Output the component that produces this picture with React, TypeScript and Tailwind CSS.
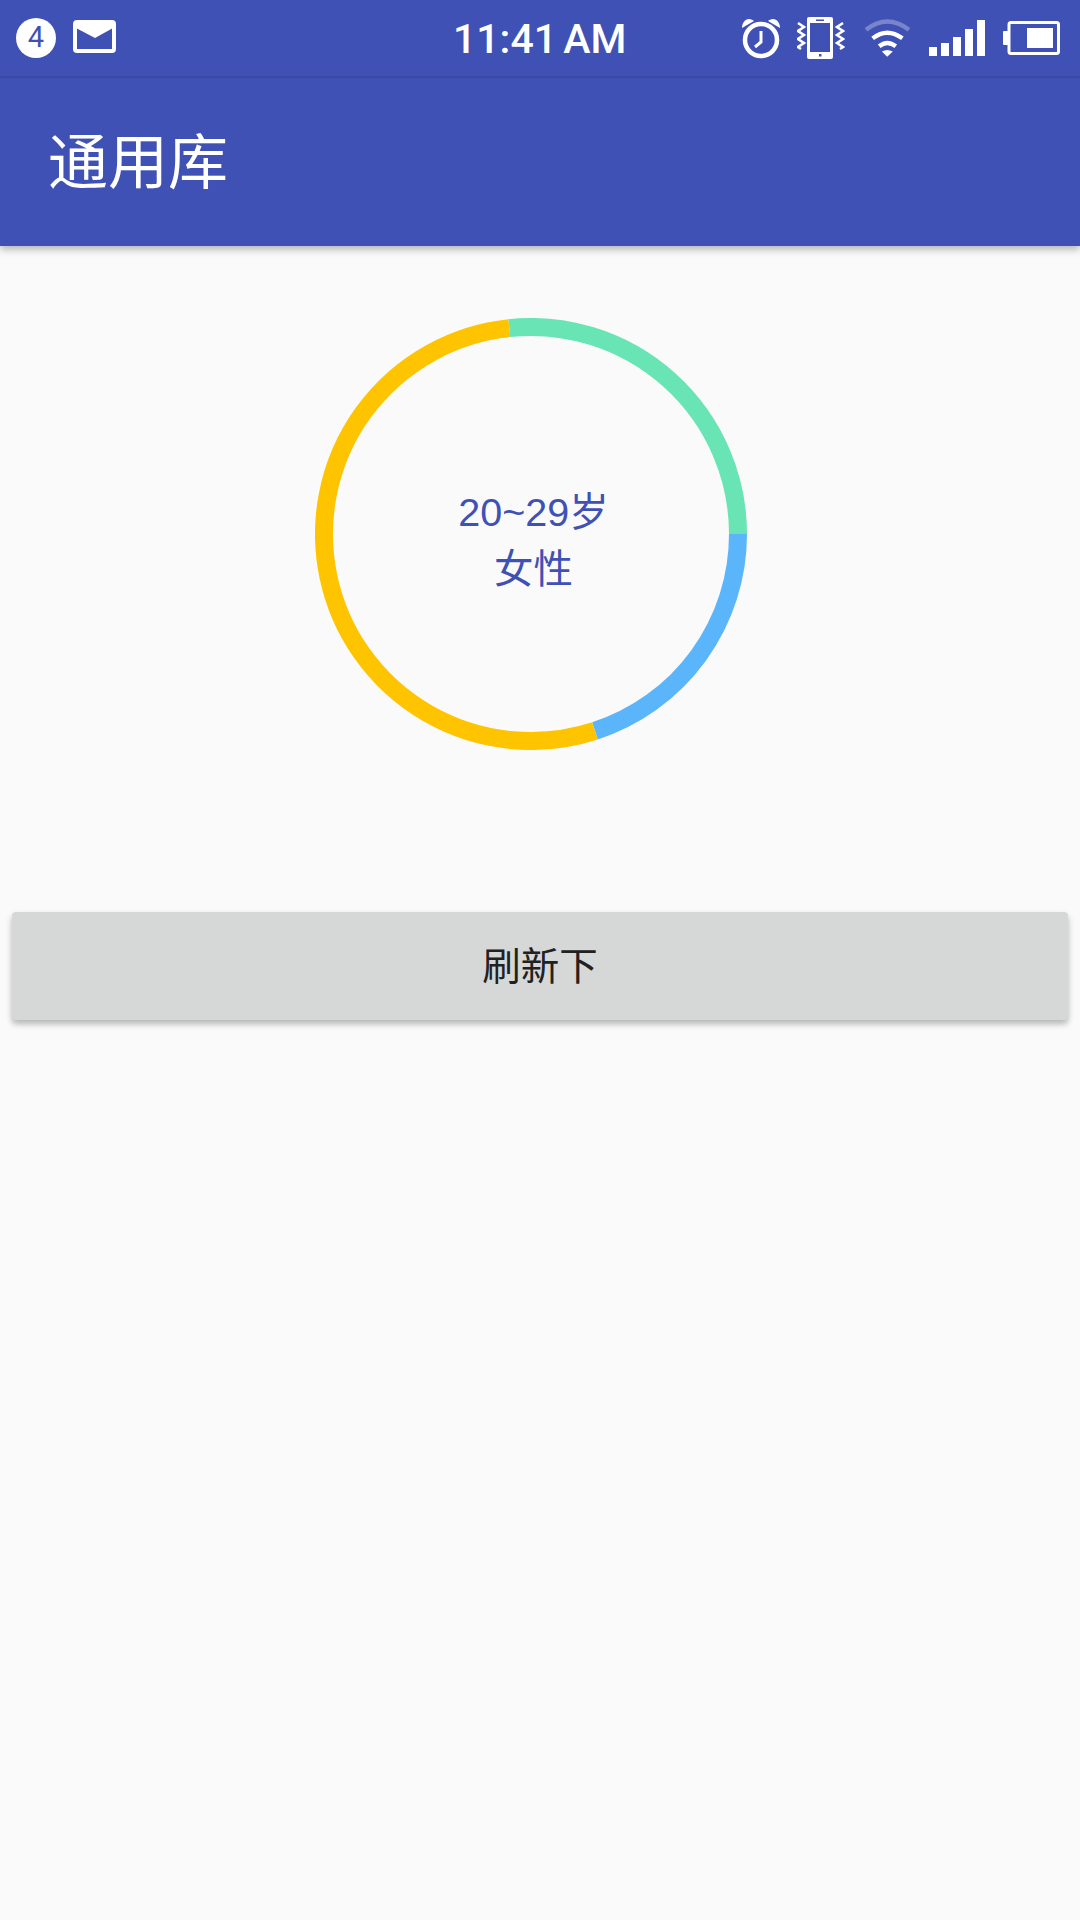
const FONT = "font-['Liberation_Sans','Noto_Sans_CJK_SC',sans-serif]"

// ring segments: start and end angle in degrees, clockwise from 3 o'clock
const segments = [
  { color: '#5bb5fb', from: 0, to: 72 },
  { color: '#ffc400', from: 72, to: 264 },
  { color: '#69e4b4', from: 264, to: 360 },
]

function arcPath(from: number, to: number) {
  const c = 216
  const r = 207
  const a = (from * Math.PI) / 180
  const b = (to * Math.PI) / 180
  const large = to - from > 180 ? 1 : 0
  return `M${c + r * Math.cos(a)} ${c + r * Math.sin(a)}A${r} ${r} 0 ${large} 1 ${c + r * Math.cos(b)} ${c + r * Math.sin(b)}`
}

function MailIcon() {
  return (
    <svg width="44" height="34" viewBox="0 0 44 34" className="ml-[17px] mt-[-2px]">
      <rect x="2" y="2" width="39" height="29" rx="2" fill="none" stroke="#fff" strokeWidth="4" />
      <path d="M3 3h37v5L22 18 3 8z" fill="#fff" />
    </svg>
  )
}

function AlarmIcon() {
  return (
    <svg width="42" height="42" viewBox="0 0 42 42">
      <circle cx="21" cy="23" r="16" fill="none" stroke="#fff" strokeWidth="4.5" />
      <path d="M21 14v11l-6 5" fill="none" stroke="#fff" strokeWidth="3" />
      <path d="M2 11C2 6 5 2 9 2c2 0 4 1 5 2z" fill="#fff" />
      <path d="M40 11c0-5-3-9-7-9-2 0-4 1-5 2z" fill="#fff" />
    </svg>
  )
}

function VibrateIcon() {
  return (
    <svg width="48" height="44" viewBox="0 0 48 44" className="ml-[15px]">
      <rect x="10" y="1" width="26" height="42" rx="2" fill="#fff" />
      <rect x="13" y="7" width="20" height="29" fill="#3f51b5" />
      <rect x="19" y="3.5" width="8" height="1.5" fill="#3f51b5" />
      <rect x="22" y="38" width="2.5" height="2.5" fill="#3f51b5" />
      <path d="M1 7l6 4-6 4 6 4-6 4 6 4-6 4 3 2" fill="none" stroke="#fff" strokeWidth="2.6" />
      <path d="M46 7l-6 4 6 4-6 4 6 4-6 4 6 4-3 2" fill="none" stroke="#fff" strokeWidth="2.6" />
    </svg>
  )
}

function WifiIcon() {
  return (
    <svg width="48" height="40" viewBox="430 55 145 120" className="ml-[19px]">
      <path d="M436 90Q500 40 566 90" fill="none" stroke="#fff" strokeOpacity="0.3" strokeWidth="13" />
      <path d="M456 116Q500 82 546 116" fill="none" stroke="#fff" strokeWidth="13" />
      <path d="M476 140Q500 120 526 140" fill="none" stroke="#fff" strokeWidth="13" />
      <path d="M484 156Q500 146 517 156L500 172z" fill="#fff" />
    </svg>
  )
}

function SignalIcon() {
  return (
    <svg width="56" height="36" viewBox="0 0 56 36" className="ml-[17px]">
      <rect x="0" y="27" width="8" height="9" fill="#fff" />
      <rect x="12" y="23" width="8" height="13" fill="#fff" />
      <rect x="24" y="17" width="8" height="19" fill="#fff" />
      <rect x="36" y="9" width="8" height="27" fill="#fff" />
      <rect x="48" y="0" width="8" height="36" fill="#fff" />
    </svg>
  )
}

function BatteryIcon() {
  return (
    <svg width="57" height="34" viewBox="0 0 57 34" className="ml-[18px]">
      <rect x="0" y="10" width="6" height="14" rx="1" fill="#fff" />
      <rect x="6" y="1.5" width="49.5" height="31" rx="2" fill="none" stroke="#fff" strokeWidth="3" />
      <rect x="24" y="7" width="26" height="20" fill="#fff" />
    </svg>
  )
}

export default function App() {
  return (
    <div className={`${FONT} h-[1920px] w-[1080px] overflow-hidden bg-[#fafafa]`}>
      <header className="relative z-10 h-[246px] bg-[#3f51b5] shadow-[0_3px_8px_rgba(0,0,0,0.3)]">
        {/* status bar */}
        <div className="flex h-[78px] items-center border-b-2 border-[#3949a3] text-white">
          <div className="ml-4 flex h-10 w-10 items-center justify-center rounded-full bg-white font-['Roboto',sans-serif] text-[29px] text-[#3f51b5]">
            4
          </div>
          <MailIcon />
          <span className="ml-[336px] mt-[2px] w-[176px] whitespace-nowrap font-['Roboto',sans-serif] text-[41px] font-medium leading-none [word-spacing:-4px]">
            11:41 AM
          </span>
          <div className="ml-auto mr-[20px] flex items-center">
            <AlarmIcon />
            <VibrateIcon />
            <WifiIcon />
            <SignalIcon />
            <BatteryIcon />
          </div>
        </div>
        {/* toolbar */}
        <div className="flex h-[168px] items-center pl-[48px] pt-[4px] text-[60px] text-white">通用库</div>
      </header>

      <main>
        <div className="relative ml-[315px] mt-[72px] h-[432px] w-[432px]">
          <svg width="432" height="432" viewBox="0 0 432 432">
            {segments.map((s) => (
              <path key={s.color} d={arcPath(s.from, s.to)} fill="none" stroke={s.color} strokeWidth="18" />
            ))}
          </svg>
          <div className="absolute inset-0 flex flex-col items-center justify-center pl-[5px] pt-[13px] text-center text-[39.5px] leading-[57px] text-[#3f51b5]">
            <div>20~29岁</div>
            <div>女性</div>
          </div>
        </div>

        <button className="ml-[12px] mt-[162px] flex h-[108px] w-[1056px] items-center justify-center rounded-[4px] bg-[#d6d7d7] pt-[2px] text-[38.5px] text-[#212121] shadow-[0_4px_6px_rgba(0,0,0,0.28)]">
          刷新下
        </button>
      </main>
    </div>
  )
}
